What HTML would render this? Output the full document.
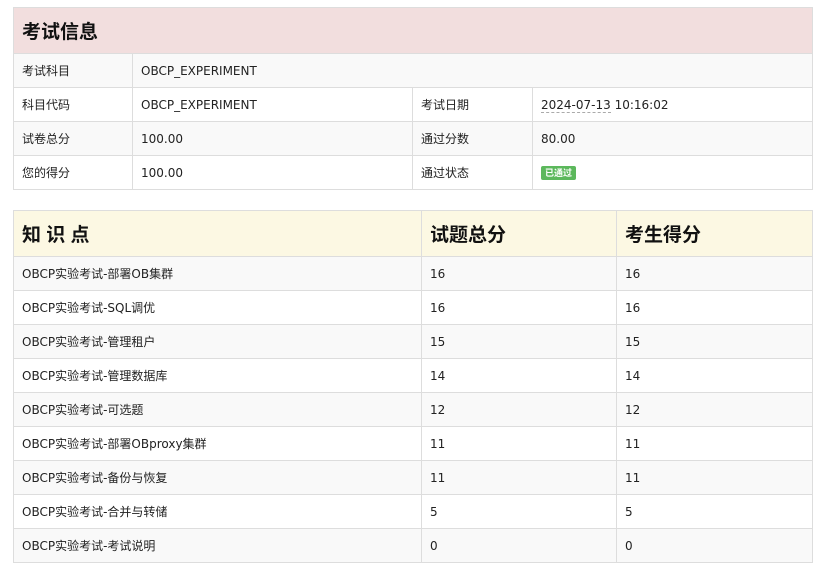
<!DOCTYPE html>
<html><head><meta charset="utf-8"><style>
body{margin:0;background:#fff;font-family:"DejaVu Sans","Noto Sans CJK SC",sans-serif;font-size:12px;color:#333}
table{position:absolute;left:13px;width:799px;border-collapse:collapse;table-layout:fixed}
td,th{border:1px solid #ddd;padding:0 8px;height:33px;text-align:left;vertical-align:middle;color:#222}
th{height:45px;font-size:19px;font-weight:bold;color:#111;font-family:"Liberation Sans","Noto Sans CJK SC",sans-serif}
tr.s td{background:#f9f9f9}
.badge{display:inline-block;background:#5cb85c;color:#fff;font-size:9px;font-weight:bold;padding:1px 4px;border-radius:2px;line-height:12px;font-family:"Noto Sans CJK SC",sans-serif}
.d{border-bottom:1px dashed #aaa}
</style></head><body>
<table style="top:7px">
<col style="width:119px"><col style="width:280px"><col style="width:120px"><col style="width:280px">
<tr><th colspan="4" style="background:#f2dede">考试信息</th></tr>
<tr class="s"><td>考试科目</td><td colspan="3">OBCP_EXPERIMENT</td></tr>
<tr><td>科目代码</td><td>OBCP_EXPERIMENT</td><td>考试日期</td><td><span class="d">2024-07-13</span> 10:16:02</td></tr>
<tr class="s"><td>试卷总分</td><td>100.00</td><td>通过分数</td><td>80.00</td></tr>
<tr><td>您的得分</td><td>100.00</td><td>通过状态</td><td><span class="badge">已通过</span></td></tr>
</table>
<table style="top:210px">
<col style="width:408px"><col style="width:195px"><col style="width:196px">
<tr style="background:#fcf8e3"><th>知 识 点</th><th>试题总分</th><th>考生得分</th></tr>
<tr class="s"><td>OBCP实验考试-部署OB集群</td><td>16</td><td>16</td></tr>
<tr><td>OBCP实验考试-SQL调优</td><td>16</td><td>16</td></tr>
<tr class="s"><td>OBCP实验考试-管理租户</td><td>15</td><td>15</td></tr>
<tr><td>OBCP实验考试-管理数据库</td><td>14</td><td>14</td></tr>
<tr class="s"><td>OBCP实验考试-可选题</td><td>12</td><td>12</td></tr>
<tr><td>OBCP实验考试-部署OBproxy集群</td><td>11</td><td>11</td></tr>
<tr class="s"><td>OBCP实验考试-备份与恢复</td><td>11</td><td>11</td></tr>
<tr><td>OBCP实验考试-合并与转储</td><td>5</td><td>5</td></tr>
<tr class="s"><td>OBCP实验考试-考试说明</td><td>0</td><td>0</td></tr>
</table>
</body></html>
